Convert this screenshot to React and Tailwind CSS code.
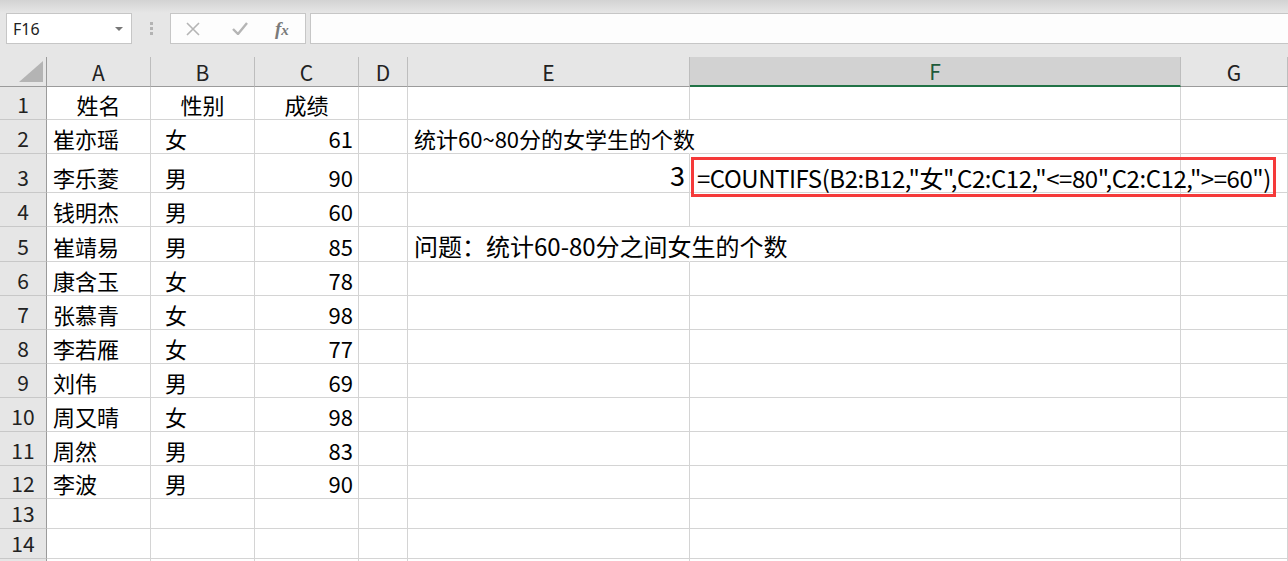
const COLS = "grid grid-cols-[47px_104px_104px_104px_49px_282px_491px_107px]";

const rows = [
	{ n: 1, h: "h-[33px]", a: "姓名", b: "性别", c: "成绩", head: true },
	{ n: 2, h: "h-[34px]", a: "崔亦瑶", b: "女", c: "61", e: "统计60~80分的女学生的个数" },
	{ n: 3, h: "h-[39px]", a: "李乐菱", b: "男", c: "90", e3: "3", f: '=COUNTIFS(B2:B12,"女",C2:C12,"<=80",C2:C12,">=60")' },
	{ n: 4, h: "h-[34px]", a: "钱明杰", b: "男", c: "60" },
	{ n: 5, h: "h-[35px]", a: "崔靖易", b: "男", c: "85", e: "问题：统计60-80分之间女生的个数", big: true },
	{ n: 6, h: "h-[34px]", a: "康含玉", b: "女", c: "78" },
	{ n: 7, h: "h-[34px]", a: "张慕青", b: "女", c: "98" },
	{ n: 8, h: "h-[34px]", a: "李若雁", b: "女", c: "77" },
	{ n: 9, h: "h-[34px]", a: "刘伟", b: "男", c: "69" },
	{ n: 10, h: "h-[34px]", a: "周又晴", b: "女", c: "98" },
	{ n: 11, h: "h-[34px]", a: "周然", b: "男", c: "83" },
	{ n: 12, h: "h-[33px]", a: "李波", b: "男", c: "90" },
	{ n: 13, h: "h-[30px]" },
	{ n: 14, h: "h-[30px]" },
	{ n: "", h: "h-[30px]" },
];

const cell = "bg-white border-r border-b border-[#d4d4d4] flex items-end pb-[2px] leading-[26px] whitespace-nowrap text-[22px] text-black";

const Row = ({ r }) => (
	<div className={`${COLS} ${r.h}`}>
		<div className="bg-[#e6e6e6] border-r border-r-[#9b9b9b] border-b border-b-[#c8c8c8] flex items-end justify-center pb-[2px] leading-[26px] text-[21px] text-[#222]">
			{r.n}
		</div>
		<div className={`${cell} ${r.head ? "justify-center" : "pl-[6px]"}`}>{r.a}</div>
		<div className={`${cell} ${r.head ? "justify-center" : "pl-[14px]"}`}>{r.b}</div>
		<div className={`${cell} ${r.head ? "justify-center" : "justify-end pr-[5px] text-[21px]"}`}>{r.c}</div>
		<div className={cell}></div>
		<div
			className={`${cell} relative ${r.e ? "z-10 border-r-transparent pl-[6px]" : ""} ${r.e3 ? "justify-end pr-[4px]" : ""}`}
		>
			{r.e && <span className={r.big ? "text-[24px]" : ""}>{r.e}</span>}
			{r.e3 && <span className="text-[27px] leading-[30px]">{r.e3}</span>}
		</div>
		<div className={`${cell} relative`}>
			{r.f && (
				<div className="absolute left-px top-[3px] z-20 w-[585px] h-[40px] border-[3px] border-[#f53a3a] flex items-center pl-[3px] pt-[1px]">
					<span className="text-[24px] leading-[30px] tracking-[-0.45px]">{r.f}</span>
				</div>
			)}
		</div>
		<div className={cell}></div>
	</div>
);

export default function App() {
	return (
		<div className="w-[1288px] h-[561px] overflow-hidden bg-[#e6e6e6] font-['Noto_Sans_CJK_SC',sans-serif]">
			{/* title strip */}
			<div className="h-[13px] bg-gradient-to-b from-[#d3d3d3] to-[#e6e6e6]"></div>

			{/* formula bar */}
			<div className="h-[31px] flex items-stretch">
				<div className="ml-[6px] w-[126px] bg-white border border-[#c6c6c6] flex items-center justify-between pl-[6px] pr-[8px]">
					<span className="font-['Noto_Sans',sans-serif] text-[16px] text-[#222]">F16</span>
					<span className="w-0 h-0 border-l-[4px] border-r-[4px] border-t-[4px] border-l-transparent border-r-transparent border-t-[#777]"></span>
				</div>
				<div className="w-[38px] flex flex-col items-center justify-center gap-[2px]">
					<span className="w-[3px] h-[3px] bg-[#b3b3b3]"></span>
					<span className="w-[3px] h-[3px] bg-[#b3b3b3]"></span>
					<span className="w-[3px] h-[3px] bg-[#b3b3b3]"></span>
				</div>
				<div className="w-[136px] bg-[#fdfdfd] border border-[#c6c6c6] flex items-center">
					<svg className="ml-[15px]" width="14" height="14" viewBox="0 0 14 14">
						<path d="M1 1 L13 13 M13 1 L1 13" stroke="#b5b5b5" strokeWidth="1.6" fill="none" />
					</svg>
					<svg className="ml-[32px]" width="16" height="13" viewBox="0 0 16 13">
						<path d="M1 7 L6 12 L15 1" stroke="#b5b5b5" strokeWidth="2.4" fill="none" />
					</svg>
					<span className="ml-[27px] font-['Liberation_Serif',serif] italic font-bold text-[19px] text-[#7a7a7a] leading-none">
						f<span className="text-[15px]">x</span>
					</span>
				</div>
				<div className="ml-[4px] flex-1 bg-[#fdfdfd] border-y border-l border-[#c6c6c6]"></div>
			</div>

			<div className="h-[13px]"></div>

			{/* column headers */}
			<div className={`${COLS} h-[30px]`}>
				<div className="bg-[#e6e6e6] border-r border-b border-[#9b9b9b] flex items-end justify-end pr-[3px] pb-[4px]">
					<svg width="24" height="21" viewBox="0 0 24 21">
						<polygon points="24,0 24,21 0,21" fill="#b4b4b4" />
					</svg>
				</div>
				{["A", "B", "C", "D", "E", "F", "G"].map((l) => (
					<div
						key={l}
						className={`flex items-end justify-center pb-[1px] leading-[26px] text-[21px] border-r border-r-[#bdbdbd] ${
							l === "F"
								? "bg-[#d2d2d2] border-b-2 border-b-[#217346] text-[#1e5a3a]"
								: "bg-[#e6e6e6] border-b border-b-[#9b9b9b] text-[#222]"
						}`}
					>
						{l}
					</div>
				))}
			</div>

			{rows.map((r, i) => (
				<Row key={i} r={r} />
			))}
		</div>
	);
}
